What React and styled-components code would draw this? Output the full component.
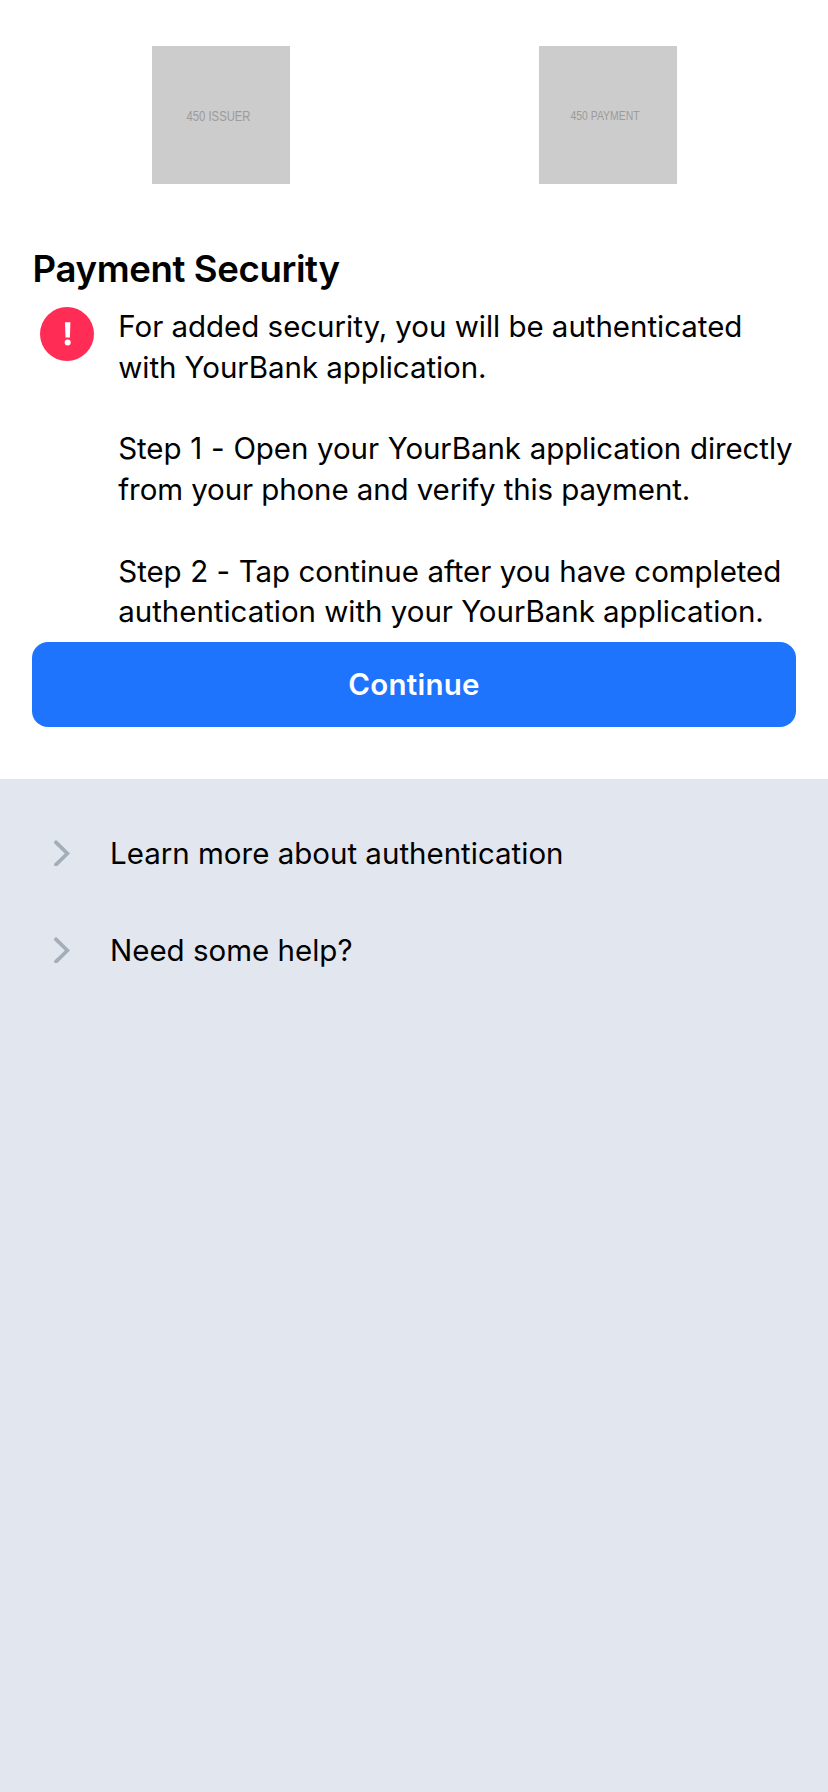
import React from 'react';
import styled, { createGlobalStyle } from 'styled-components';

const GlobalStyle = createGlobalStyle`
  *, *::before, *::after { box-sizing: border-box; }
  html, body { margin: 0; padding: 0; background: #e2e6ee; }
  body { font-family: Inter, "Liberation Sans", sans-serif; color: #000; }
`;

const Page = styled.div`
  display: flex;
  flex-direction: column;
  min-height: 1792px;
  background: #e2e6ee;
`;

const Panel = styled.main`
  height: 779px;
  padding: 46px 32px 0;
  background: #fff;
`;

const Logos = styled.header`
  display: flex;
  gap: 249px;
  height: 201px;
  padding-left: 119.7px;
`;

const Logo = styled.svg`
  display: block;
  flex: none;
  width: 138px;
  height: 138px;
`;

const LogoLabel = styled.text`
  font-family: "Liberation Sans", Arial, sans-serif;
  fill: #9b9b9b;
`;

const Title = styled.h1`
  margin: 0;
  height: 59px;
  padding-left: 0.6px;
  font-size: 36.6px;
  font-weight: 600;
  line-height: 44px;
  letter-spacing: -0.38px;
`;

const Notice = styled.section`
  display: flex;
  height: 336px;
`;

const WarningIcon = styled.svg`
  flex: none;
  width: 54px;
  height: 54px;
  margin: 1px 24.3px 0 8px;
`;

const Message = styled.div`
  display: flex;
  flex-direction: column;
  gap: 40.75px;
`;

const Paragraph = styled.p`
  margin: 0;
  font-size: 29.5px;
  line-height: 40.75px;
  white-space: nowrap;
`;

const Line = styled.span`
  display: block;
  letter-spacing: ${({ $track = 0 }) => $track}px;
  word-spacing: ${({ $wordGap = 0 }) => $wordGap}px;
`;

const ContinueButton = styled.button`
  display: flex;
  align-items: center;
  justify-content: center;
  width: 100%;
  height: 85px;
  padding: 0 0 2px;
  border: 0;
  border-radius: 16px;
  background: #1e74fd;
  color: #fff;
  font: 600 29.5px/40px Inter, "Liberation Sans", sans-serif;
  letter-spacing: 0.25px;
`;

const Links = styled.nav`
  display: flex;
  flex-direction: column;
  gap: 57px;
  padding: 54px 32px 0 54px;
`;

const LinkRow = styled.div`
  display: flex;
  align-items: center;
  gap: 40px;
  height: 40px;
  font-size: 29.5px;
  line-height: 40px;
  white-space: nowrap;
`;

const Chevron = styled.svg`
  flex: none;
  width: 16px;
  height: 26px;
  fill: none;
  stroke: #a4adba;
  stroke-width: 3.8;
`;

const paragraphs = [
  [
    { text: 'For added security, you will be authenticated', track: -0.03 },
    { text: 'with YourBank application.', track: -0.07 },
  ],
  [
    { text: 'Step 1 - Open your YourBank application directly', track: -0.11, wordGap: 0.7 },
    { text: 'from your phone and verify this payment.', track: -0.1 },
  ],
  [
    { text: 'Step 2 - Tap continue after you have completed', track: -0.06, wordGap: 0.3 },
    { text: 'authentication with your YourBank application.', track: -0.033 },
  ],
];

const links = ['Learn more about authentication', 'Need some help?'];

function PlaceholderLogo({ label, x, y, size, length }) {
  return (
    <Logo viewBox="0 0 138 138">
      <rect x="0" y="0" width="138" height="138" fill="#ccc" />
      <LogoLabel x={x} y={y} fontSize={size} textLength={length} lengthAdjust="spacingAndGlyphs">
        {label}
      </LogoLabel>
    </Logo>
  );
}

export default function App() {
  return (
    <Page>
      <GlobalStyle />
      <Panel>
        <Logos>
          <PlaceholderLogo label="450 ISSUER" x={34.5} y={74.5} size={14.6} length={64} />
          <PlaceholderLogo label="450 PAYMENT" x={31.5} y={74} size={12.8} length={69} />
        </Logos>
        <Title>Payment Security</Title>
        <Notice>
          <WarningIcon viewBox="0 0 54 54">
            <circle cx="27" cy="27" r="27" fill="#ff2d55" />
            <path d="M25 15.2H30.4L29.9 30.4H25.5Z" fill="#fff" />
            <circle cx="27.7" cy="35.6" r="3" fill="#fff" />
          </WarningIcon>
          <Message>
            {paragraphs.map((lines) => (
              <Paragraph key={lines[0].text}>
                {lines.map(({ text, track, wordGap }) => (
                  <Line key={text} $track={track} $wordGap={wordGap}>{text}</Line>
                ))}
              </Paragraph>
            ))}
          </Message>
        </Notice>
        <ContinueButton type="button">Continue</ContinueButton>
      </Panel>
      <Links>
        {links.map((text) => (
          <LinkRow key={text}>
            <Chevron viewBox="0 0 16 26">
              <path d="M2 2.3L13.4 13.5L2 24.6" strokeLinecap="round" />
            </Chevron>
            {text}
          </LinkRow>
        ))}
      </Links>
    </Page>
  );
}
